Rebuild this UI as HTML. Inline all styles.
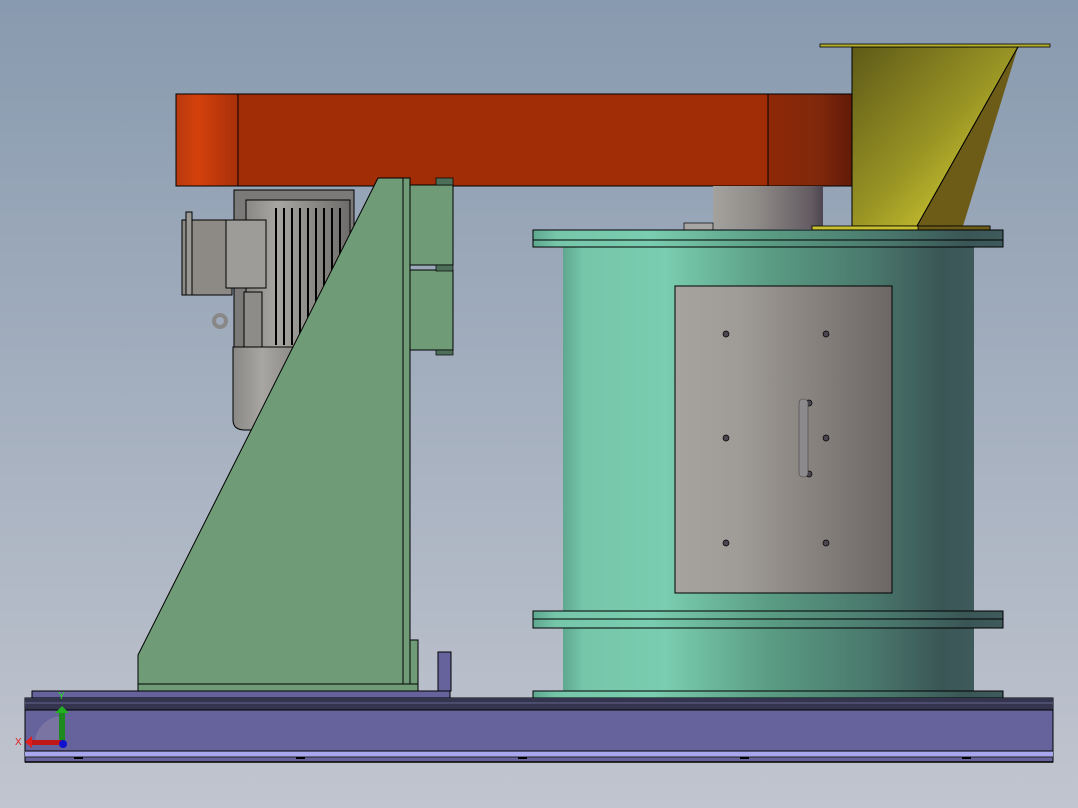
<!DOCTYPE html>
<html><head><meta charset="utf-8"><style>html,body{margin:0;padding:0;width:1078px;height:808px;overflow:hidden}</style></head>
<body>
<svg width="1078" height="808" viewBox="0 0 1078 808" xmlns="http://www.w3.org/2000/svg">
<defs>
<linearGradient id="bg" x1="0" y1="0" x2="0" y2="1"><stop offset="0" stop-color="#889aaf"/><stop offset="1" stop-color="#c1c5cf"/></linearGradient>
<linearGradient id="or1" x1="0" x2="1"><stop offset="0" stop-color="#b83a0e"/><stop offset=".35" stop-color="#d4410c"/><stop offset="1" stop-color="#a8300a"/></linearGradient>
<linearGradient id="or3" x1="0" x2="1"><stop offset="0" stop-color="#8e2806"/><stop offset=".6" stop-color="#80280c"/><stop offset="1" stop-color="#621a08"/></linearGradient>
<linearGradient id="yel" x1="0" y1="0" x2="1" y2="1"><stop offset="0" stop-color="#5e5a18"/><stop offset=".5" stop-color="#999424"/><stop offset="1" stop-color="#ece338"/></linearGradient>
<linearGradient id="cyl" x1="0" x2="1"><stop offset="0" stop-color="#5fa890"/><stop offset=".05" stop-color="#76c6aa"/><stop offset=".25" stop-color="#7acdb0"/><stop offset=".5" stop-color="#5a9c84"/><stop offset=".75" stop-color="#4a786c"/><stop offset=".92" stop-color="#3a5656"/><stop offset="1" stop-color="#3f5a5a"/></linearGradient>
<linearGradient id="door" x1="0" x2="1"><stop offset="0" stop-color="#a6a39e"/><stop offset=".3" stop-color="#9f9b96"/><stop offset="1" stop-color="#6c6765"/></linearGradient>
<linearGradient id="gcyl" x1="0" x2="1"><stop offset="0" stop-color="#a4a29e"/><stop offset=".4" stop-color="#8f8b88"/><stop offset=".9" stop-color="#625a60"/><stop offset="1" stop-color="#4c4450"/></linearGradient>
<linearGradient id="mot" x1="0" x2="1"><stop offset="0" stop-color="#8a8884"/><stop offset=".3" stop-color="#a8a6a2"/><stop offset="1" stop-color="#6e6c6a"/></linearGradient>
</defs>
<rect width="1078" height="808" fill="url(#bg)"/>

<!-- motor -->
<g stroke="#000" stroke-width="1">
<rect x="234" y="190" width="120" height="160" fill="#7c7a78"/>
<rect x="246" y="200" width="104" height="150" fill="url(#mot)"/>
<g stroke="#000" stroke-width="2">
<line x1="276" y1="208" x2="276" y2="345"/><line x1="284" y1="208" x2="284" y2="345"/><line x1="292" y1="208" x2="292" y2="345"/><line x1="300" y1="208" x2="300" y2="345"/><line x1="308" y1="208" x2="308" y2="345"/><line x1="316" y1="208" x2="316" y2="345"/><line x1="324" y1="208" x2="324" y2="345"/><line x1="332" y1="208" x2="332" y2="345"/><line x1="340" y1="208" x2="340" y2="345"/>
</g>
<path d="M233 347 H330 V420 Q330 430 300 430 H245 Q233 430 233 420 Z" fill="url(#mot)"/>
<rect x="182" y="220" width="50" height="75" fill="#8d8a86"/>
<rect x="186" y="212" width="6" height="83" fill="#9a9894"/>
<rect x="226" y="220" width="40" height="68" fill="#9e9c98"/>
<rect x="244" y="292" width="18" height="55" fill="#8e8c89"/>
<circle cx="220" cy="321" r="6" fill="none" stroke="#8a8886" stroke-width="4"/>
</g>

<!-- beam -->
<rect x="176" y="94" width="62" height="92" fill="url(#or1)" stroke="#000"/>
<rect x="238" y="94" width="530" height="92" fill="#a02d05" stroke="#000"/>
<rect x="768" y="94" width="84" height="92" fill="url(#or3)" stroke="#000"/>

<!-- gray cylinder -->
<rect x="713" y="186" width="110" height="43" fill="url(#gcyl)"/>
<rect x="684" y="223" width="29" height="7" fill="#a8a6a4" stroke="#000" stroke-width=".7"/>

<!-- hopper -->
<polygon points="852,47 1018,47 917,226 852,226" fill="url(#yel)" stroke="#000"/>
<polygon points="1018,47 963,226 917,226" fill="#6c5c18"/>
<line x1="1018" y1="47" x2="917" y2="226" stroke="#000"/>
<rect x="820" y="44" width="230" height="3" fill="#b5ad2c" stroke="#000" stroke-width=".8"/>
<rect x="812" y="226" width="178" height="4" fill="#c8c030" stroke="#000" stroke-width=".8"/>
<rect x="918" y="226" width="72" height="4" fill="#6c5c18" stroke="#000" stroke-width=".8"/>

<!-- cylinder -->
<rect x="563" y="247" width="411" height="445" fill="url(#cyl)"/>
<rect x="533" y="230" width="470" height="17" fill="url(#cyl)" stroke="#000"/>
<line x1="533" y1="240" x2="1003" y2="240" stroke="#000"/>
<rect x="533" y="611" width="470" height="17" fill="url(#cyl)" stroke="#000"/>
<line x1="533" y1="619" x2="1003" y2="619" stroke="#000"/>
<rect x="533" y="691" width="470" height="7" fill="url(#cyl)" stroke="#000"/>

<!-- door -->
<rect x="675" y="286" width="217" height="307" fill="url(#door)" stroke="#000"/>
<g fill="#4a4650" stroke="#000" stroke-width=".7">
<circle cx="726" cy="334" r="3"/><circle cx="826" cy="334" r="3"/>
<circle cx="726" cy="438" r="3"/><circle cx="826" cy="438" r="3"/>
<circle cx="726" cy="543" r="3"/><circle cx="826" cy="543" r="3"/>
<circle cx="809" cy="403" r="3"/><circle cx="809" cy="474" r="3"/>
</g>
<rect x="799" y="399" width="9" height="78" rx="4" fill="#8c8a8c" stroke="#444" stroke-width=".6"/>

<!-- green support -->
<polygon points="378,178 410,178 410,684 138,684 138,655" fill="#6f9b77" stroke="#000"/>
<line x1="403" y1="178" x2="403" y2="684" stroke="#000"/>
<rect x="410" y="185" width="43" height="80" fill="#6f9b77" stroke="#000"/>
<rect x="410" y="270" width="43" height="80" fill="#6f9b77" stroke="#000"/>
<rect x="436" y="178" width="17" height="7" fill="#4d6e58" stroke="#000" stroke-width=".7"/>
<rect x="436" y="265" width="17" height="6" fill="#4d6e58" stroke="#000" stroke-width=".7"/>
<rect x="436" y="350" width="17" height="5" fill="#4d6e58" stroke="#000" stroke-width=".7"/>
<rect x="138" y="684" width="280" height="7" fill="#6f9b77" stroke="#000"/>
<rect x="410" y="640" width="8" height="44" fill="#6f9b77" stroke="#000"/>

<!-- base -->
<rect x="438" y="652" width="13" height="39" fill="#65629c" stroke="#000"/>
<rect x="32" y="691" width="418" height="7" fill="#65629c" stroke="#000"/>
<rect x="25" y="698" width="1028" height="64" fill="#65629c" stroke="#000"/>
<rect x="25" y="698" width="1028" height="12" fill="#35344e"/>
<line x1="25" y1="703" x2="1053" y2="703" stroke="#55547a" stroke-width="1.5"/>
<line x1="25" y1="710" x2="1053" y2="710" stroke="#000"/>
<rect x="25" y="751" width="1028" height="6" fill="#a8a6ec"/>
<line x1="25" y1="751" x2="1053" y2="751" stroke="#000"/>
<line x1="25" y1="757" x2="1053" y2="757" stroke="#222"/>
<line x1="25" y1="762" x2="1053" y2="762" stroke="#000" stroke-width="1.5"/>
<g fill="#000"><rect x="74" y="757" width="9" height="2"/><rect x="296" y="757" width="9" height="2"/><rect x="518" y="757" width="9" height="2"/><rect x="740" y="757" width="9" height="2"/><rect x="962" y="757" width="9" height="2"/></g>

<!-- axis triad -->
<path d="M35 740 A28 28 0 0 1 62 716 V742 Z" fill="#8880a8" opacity=".6"/>
<rect x="59" y="712" width="6" height="30" fill="#1c8a1c"/>
<polygon points="55,713 62,706 69,713" fill="#22b022"/>
<rect x="32" y="740" width="30" height="5" fill="#c01818"/>
<polygon points="32,736 25,742 32,748" fill="#e02020"/>
<circle cx="63" cy="744" r="4" fill="#1010d0"/>
<text x="58" y="699" font-family="Liberation Sans, sans-serif" font-size="10" fill="#20e020">Y</text>
<text x="15" y="745" font-family="Liberation Sans, sans-serif" font-size="10" fill="#e02020">X</text>
</svg>
</body></html>
